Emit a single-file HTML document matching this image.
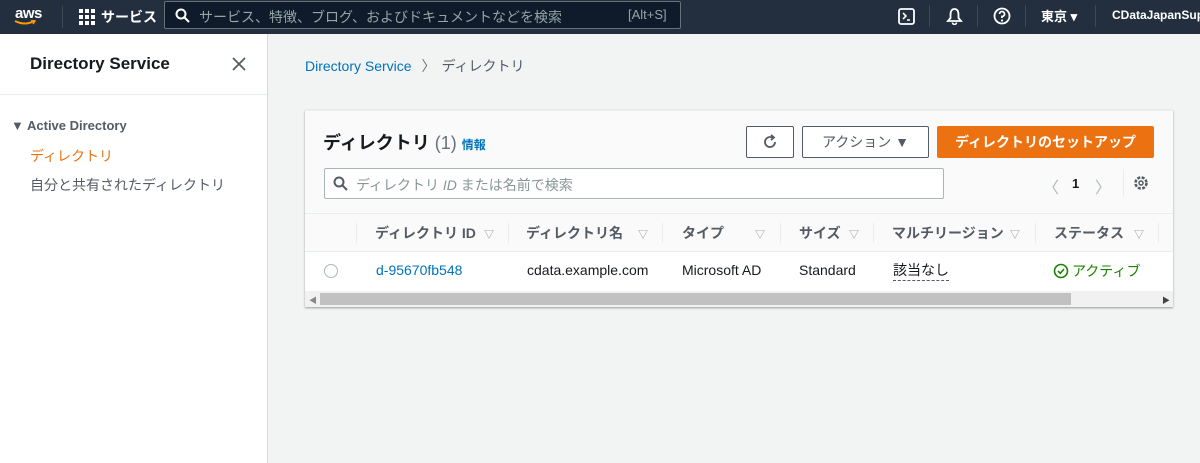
<!DOCTYPE html>
<html><head><meta charset="utf-8"><style>
*{box-sizing:border-box;margin:0;padding:0}
body{width:1200px;height:463px;overflow:hidden;background:#f2f3f3;font-family:"Liberation Sans","Noto Sans CJK JP",sans-serif;font-size:14px;color:#16191f;position:relative}
.abs{position:absolute}
.top{left:0;top:0;width:1200px;height:34px;background:#232f3e;color:#fff}
.side{left:0;top:34px;width:268px;height:429px;background:#fff;border-right:1px solid #d5dbdb}
.card{left:305px;top:110px;width:868px;height:197px;background:#fafafa;box-shadow:0 1px 2px rgba(0,28,36,.4);border-top:1px solid #eaeded}
.btn{position:absolute;border:1px solid #545b64;background:#fff;border-radius:2px;height:32px;font-size:14px;color:#545b64;display:flex;align-items:center;justify-content:center}
.th{position:absolute;top:9px;font-size:14px;color:#545b64;font-weight:bold}
.sep{position:absolute;top:9px;width:1px;height:20px;background:#eaeded}
.tri{color:#879596;font-size:10px;position:absolute;top:12px}
</style></head><body>
<div class="abs top">
  <div class="abs" style="left:15px;top:5px;font-size:15px;font-weight:bold;letter-spacing:-0.5px">aws</div>
  <svg class="abs" style="left:14px;top:20px" width="22" height="6"><path d="M1 1 Q11 6 20 1" stroke="#ff9900" stroke-width="2" fill="none"/><path d="M17 0 L21 1 L19 4" stroke="#ff9900" stroke-width="1.5" fill="none"/></svg>
  <div class="abs" style="left:62px;top:6px;width:1px;height:22px;background:#414750"></div>
  <svg class="abs" style="left:79px;top:9px" width="16" height="16" fill="#fff"><rect x="0" y="0" width="4" height="4"/><rect x="6" y="0" width="4" height="4"/><rect x="12" y="0" width="4" height="4"/><rect x="0" y="6" width="4" height="4"/><rect x="6" y="6" width="4" height="4"/><rect x="12" y="6" width="4" height="4"/><rect x="0" y="12" width="4" height="4"/><rect x="6" y="12" width="4" height="4"/><rect x="12" y="12" width="4" height="4"/></svg>
  <div class="abs" style="left:101px;top:7px;font-size:14px;font-weight:bold">サービス</div>
  <div class="abs" style="left:164px;top:1px;width:517px;height:28px;background:#0f1b2a;border:1px solid #687078;border-radius:2px"></div>
  <svg class="abs" style="left:175px;top:8px" width="15" height="15"><circle cx="6" cy="6" r="4.5" stroke="#fff" stroke-width="2" fill="none"/><path d="M9.5 9.5 L14 14" stroke="#fff" stroke-width="2"/></svg>
  <div class="abs" style="left:199px;top:7px;font-size:14px;color:#95a5a6">サービス、特徴、ブログ、およびドキュメントなどを検索</div>
  <div class="abs" style="left:628px;top:7px;font-size:13px;color:#95a5a6">[Alt+S]</div>
  <svg class="abs" style="left:898px;top:8px" width="17" height="17"><rect x="1" y="1" width="15" height="15" rx="2" stroke="#fff" stroke-width="1.8" fill="none"/><path d="M5 5 L8 8 L5 11 M9 12 H12" stroke="#fff" stroke-width="1.6" fill="none"/></svg>
  <div class="abs" style="left:929px;top:5px;width:1px;height:22px;background:#414750"></div>
  <svg class="abs" style="left:946px;top:7px" width="17" height="18"><path d="M8.5 2 C5 2 4.5 5 4.5 8 V11 L2 14 H15 L12.5 11 V8 C12.5 5 12 2 8.5 2Z" stroke="#fff" stroke-width="1.8" fill="none"/><path d="M6.5 15.5 A2 2 0 0 0 10.5 15.5" stroke="#fff" stroke-width="1.6" fill="none"/></svg>
  <div class="abs" style="left:977px;top:5px;width:1px;height:22px;background:#414750"></div>
  <svg class="abs" style="left:993px;top:7px" width="18" height="18"><circle cx="9" cy="9" r="7.5" stroke="#fff" stroke-width="1.8" fill="none"/><path d="M6.5 7 A2.5 2.5 0 1 1 9 9.5 V11" stroke="#fff" stroke-width="1.8" fill="none"/><circle cx="9" cy="13.5" r="1.1" fill="#fff"/></svg>
  <div class="abs" style="left:1025px;top:5px;width:1px;height:22px;background:#414750"></div>
  <div class="abs" style="left:1041px;top:6px;font-size:13px;font-weight:bold">東京 ▾</div>
  <div class="abs" style="left:1095px;top:5px;width:1px;height:22px;background:#414750"></div>
  <div class="abs" style="left:1112px;top:8px;font-size:12px;font-weight:bold;white-space:nowrap">CDataJapanSupport</div>
</div>
<div class="abs side">
  <div class="abs" style="left:30px;top:20px;font-size:17px;font-weight:bold">Directory Service</div>
  <svg class="abs" style="left:232px;top:23px" width="14" height="14"><path d="M1 1 L13 13 M13 1 L1 13" stroke="#545b64" stroke-width="1.8"/></svg>
  <div class="abs" style="left:0;top:60px;width:267px;height:1px;background:#eaeded"></div>
  <div class="abs" style="left:11px;top:84px;font-size:13px;font-weight:bold;color:#545b64">▼ Active Directory</div>
  <div class="abs" style="left:30px;top:112px;font-size:14px;color:#ec7211">ディレクトリ</div>
  <div class="abs" style="left:30px;top:141px;font-size:14px;color:#545b64">自分と共有されたディレクトリ</div>
</div>
<div class="abs" style="left:305px;top:56px;font-size:14px;color:#0073bb">Directory Service <span style="color:#687078;margin:0 6px">〉</span><span style="color:#545b64">ディレクトリ</span></div>
<div class="abs card">
  <div class="abs" style="left:18px;top:18px;font-size:18px;font-weight:bold">ディレクトリ <span style="font-weight:normal;color:#687078">(1)</span> <span style="font-size:12px;color:#0073bb;font-weight:bold">情報</span></div>
  <div class="btn" style="left:441px;top:15px;width:48px"><svg width="16" height="16"><path d="M13 8 A5 5 0 1 1 10.5 3.7" stroke="#545b64" stroke-width="1.8" fill="none"/><path d="M9 1 L12 3.5 L9 6" stroke="#545b64" stroke-width="1.8" fill="none"/></svg></div>
  <div class="btn" style="left:497px;top:15px;width:127px">アクション ▼</div>
  <div class="btn" style="left:632px;top:15px;width:217px;background:#ec7211;border-color:#ec7211;color:#fff;font-weight:bold">ディレクトリのセットアップ</div>
  <div class="abs" style="left:19px;top:57px;width:620px;height:31px;background:#fff;border:1px solid #aab7b8;border-radius:2px"></div>
  <svg class="abs" style="left:28px;top:65px" width="15" height="15"><circle cx="6" cy="6" r="4.5" stroke="#545b64" stroke-width="2" fill="none"/><path d="M9.5 9.5 L14 14" stroke="#545b64" stroke-width="2"/></svg>
  <div class="abs" style="left:51px;top:64px;color:#879596">ディレクトリ <i>ID</i> または名前で検索</div>
  <div class="abs" style="left:738px;top:63px;color:#aab7b8;font-size:16px">〈</div>
  <div class="abs" style="left:767px;top:65px;font-weight:bold;font-size:13px">1</div>
  <div class="abs" style="left:790px;top:63px;color:#aab7b8;font-size:16px">〉</div>
  <div class="abs" style="left:818px;top:58px;width:1px;height:28px;background:#eaeded"></div>
  <svg class="abs" style="left:828px;top:64px" width="16" height="16"><circle cx="8" cy="8" r="5.5" stroke="#545b64" stroke-width="2.5" fill="none" stroke-dasharray="3 1.4"/><circle cx="8" cy="8" r="2" stroke="#545b64" stroke-width="1.5" fill="none"/></svg>
  <div class="abs" style="left:0;top:102px;width:868px;height:38px;background:#fafafa;border-top:1px solid #eaeded">
    <div class="sep" style="left:51px"></div>
    <div class="th" style="left:70px">ディレクトリ ID</div><div class="tri" style="left:179px">▽</div>
    <div class="sep" style="left:203px"></div>
    <div class="th" style="left:221px">ディレクトリ名</div><div class="tri" style="left:333px">▽</div>
    <div class="sep" style="left:357px"></div>
    <div class="th" style="left:377px">タイプ</div><div class="tri" style="left:450px">▽</div>
    <div class="sep" style="left:475px"></div>
    <div class="th" style="left:494px">サイズ</div><div class="tri" style="left:544px">▽</div>
    <div class="sep" style="left:568px"></div>
    <div class="th" style="left:587px">マルチリージョン</div><div class="tri" style="left:705px">▽</div>
    <div class="sep" style="left:730px"></div>
    <div class="th" style="left:749px">ステータス</div><div class="tri" style="left:829px">▽</div>
    <div class="sep" style="left:853px"></div>
  </div>
  <div class="abs" style="left:0;top:140px;width:868px;height:40px;background:#fff;border-top:1px solid #eaeded">
    <div class="abs" style="left:19px;top:12px;width:14px;height:14px;border:1px solid #aab7b8;border-radius:50%"></div>
    <div class="abs" style="left:71px;top:10px;color:#0073bb">d-95670fb548</div>
    <div class="abs" style="left:222px;top:10px">cdata.example.com</div>
    <div class="abs" style="left:377px;top:10px">Microsoft AD</div>
    <div class="abs" style="left:494px;top:10px">Standard</div>
    <div class="abs" style="left:588px;top:9px;border-bottom:1px dashed #545b64;line-height:19px">該当なし</div>
    <svg class="abs" style="left:748px;top:11px" width="16" height="16"><circle cx="8" cy="8" r="6.5" stroke="#1d8102" stroke-width="1.6" fill="none"/><path d="M5 8 L7.3 10.3 L11 6" stroke="#1d8102" stroke-width="1.6" fill="none"/></svg>
    <div class="abs" style="left:767px;top:9px;color:#1d8102">アクティブ</div>
  </div>
  <div class="abs" style="left:0;top:180px;width:868px;height:16px;background:#f1f1f1">
    <div class="abs" style="left:4px;top:4px;font-size:8px;color:#888">◀</div>
    <div class="abs" style="left:15px;top:2px;width:751px;height:12px;background:#c1c1c1"></div>
    <div class="abs" style="left:857px;top:4px;font-size:8px;color:#444">▶</div>
  </div>
</div>
</body></html>
